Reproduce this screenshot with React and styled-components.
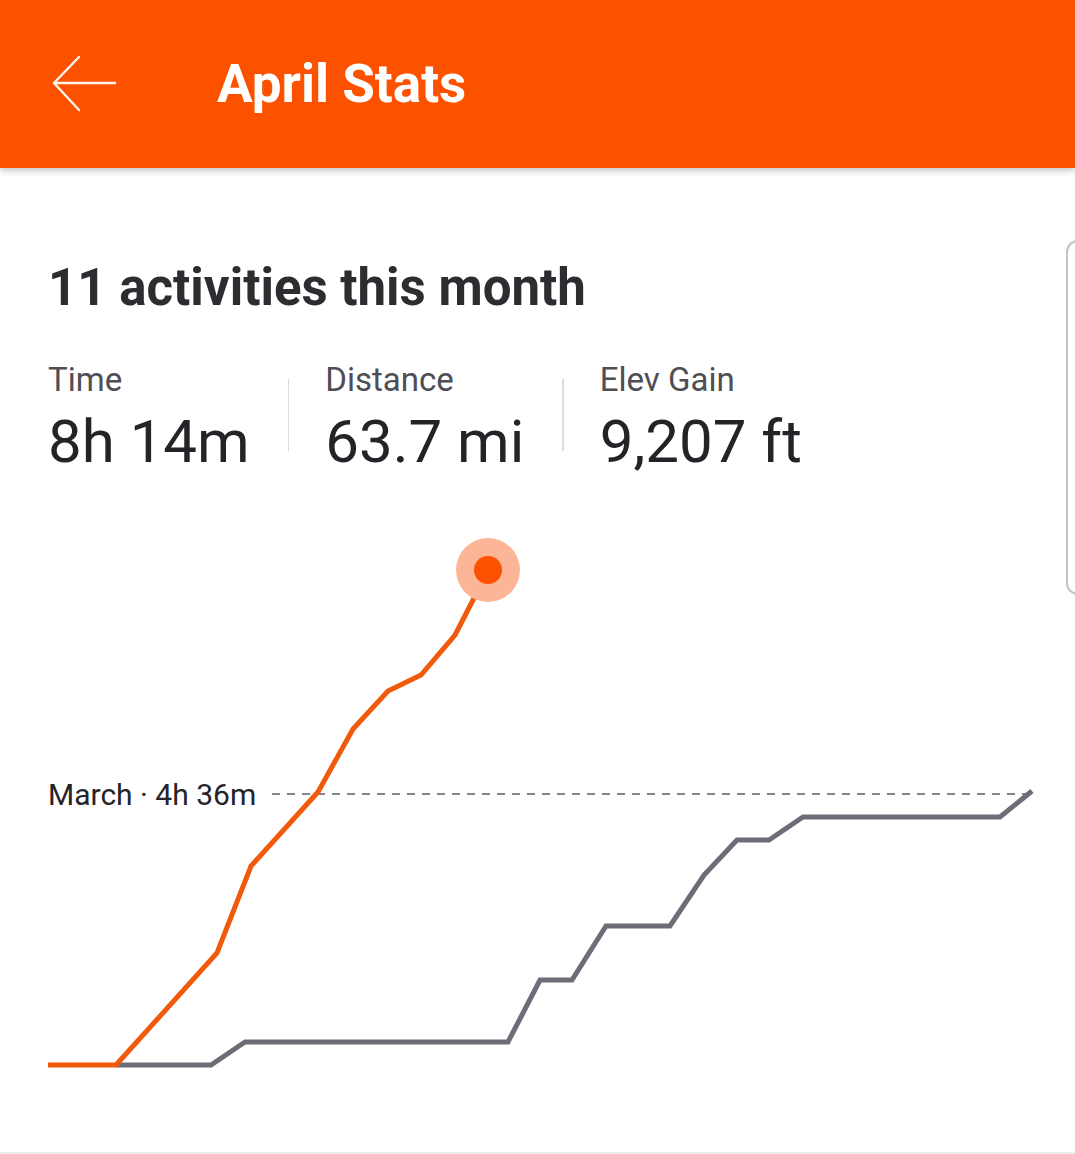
import React from 'react';
import styled, { createGlobalStyle } from 'styled-components';

const GlobalStyle = createGlobalStyle`
  body {
    margin: 0;
    background: #fff;
    font-family: Roboto, "Noto Sans", sans-serif;
  }
`;

const orangePoints = [
    [48, 1066], [116, 1066], [217, 954], [251, 867], [318, 793], [353, 730],
    [388, 692], [421, 676], [455, 636], [488, 572],
];

const grayPoints = [
    [116, 1066], [211, 1066], [245, 1043], [508, 1043], [540, 981], [572, 981],
    [606, 927], [670, 927], [704, 876], [737, 841], [769, 841], [803, 818],
    [1000, 818], [1032, 792],
];

// chart svg sits at y=520 on the page, points above are page coords
const CHART_TOP = 520;

const toPath = (points) =>
    points.map(([x, y]) => `${x},${y - CHART_TOP}`).join(' ');

const stats = [
    { label: 'Time', value: '8h 14m' },
    { label: 'Distance', value: '63.7 mi' },
    { label: 'Elev Gain', value: '9,207 ft' },
];

const BackArrow = () => (
    <svg width="66" height="58" viewBox="0 0 66 58" fill="none">
        <path d="M64 28 H3 M28 2 L3 28 L28 55" stroke="#FFF4EC" strokeWidth="2.4" strokeLinecap="round" strokeLinejoin="round" />
    </svg>
);

const App = () => {
    const last = orangePoints[orangePoints.length - 1];
    return (
        <Page>
            <GlobalStyle />
            <Header>
                <BackButton><BackArrow /></BackButton>
                <Title>April Stats</Title>
            </Header>
            <Carousel>
                <Panel>
                    <Heading>11 activities this month</Heading>
                    <StatsRow>
                        {stats.map((s, i) => (
                            <React.Fragment key={s.label}>
                                {i > 0 && <Divider />}
                                <Stat>
                                    <StatLabel>{s.label}</StatLabel>
                                    <StatValue>{s.value}</StatValue>
                                </Stat>
                            </React.Fragment>
                        ))}
                    </StatsRow>
                    <Chart width="1066" height="580" viewBox="0 0 1066 580">
                        <line x1="272" y1={795 - CHART_TOP} x2="1030" y2={795 - CHART_TOP} stroke="#85858a" strokeWidth="1.8" strokeDasharray="8 7" />
                        <text x="48" y={806 - CHART_TOP} fontFamily="Roboto, sans-serif" fontSize="30" fill="#242428">March · 4h 36m</text>
                        <polyline points={toPath(grayPoints)} fill="none" stroke="#6d6d78" strokeWidth="5" />
                        <polyline points={toPath(orangePoints)} fill="none" stroke="#F05A0A" strokeWidth="5" />
                        <circle cx={last[0]} cy={last[1] - CHART_TOP - 1} r="32" fill="#FDB598" />
                        <circle cx={last[0]} cy={last[1] - CHART_TOP - 1} r="14" fill="#FC5200" />
                    </Chart>
                </Panel>
                <NextCard />
            </Carousel>
            <BottomRule />
        </Page>
    );
};

const Page = styled.div`
  width: 1075px;
  height: 1154px;
  display: flex;
  flex-direction: column;
  overflow: hidden;
`;

const Header = styled.header`
  height: 168px;
  flex-shrink: 0;
  background: #FC5200;
  display: flex;
  align-items: center;
  padding-left: 51px;
  box-shadow: 0 3px 6px rgba(0, 0, 0, 0.22);
  position: relative;
  z-index: 1;
`;

const BackButton = styled.div`
  display: flex;
  align-items: center;
`;

const Title = styled.h1`
  margin: 0 0 0 100px;
  color: #fff;
  font-size: 53px;
  font-weight: 700;
`;

const Carousel = styled.div`
  flex: 1;
  display: flex;
  align-items: flex-start;
`;

const Panel = styled.section`
  width: 1066px;
  flex-shrink: 0;
  padding-top: 90px;
  box-sizing: border-box;
`;

const Heading = styled.h2`
  margin: 0 0 0 48px;
  font-size: 51px;
  line-height: 60px;
  font-weight: 700;
  color: #2d2d31;
`;

const StatsRow = styled.div`
  display: flex;
  align-items: flex-start;
  margin: 43px 0 0 48px;
`;

const Stat = styled.div`
  display: flex;
  flex-direction: column;
`;

const Divider = styled.div`
  width: 1.5px;
  height: 72px;
  margin: 18px 36px 0 38px;
  background: #dcdcde;
`;

const StatLabel = styled.span`
  font-size: 33px;
  line-height: 38px;
  color: #4e4e54;
`;

const StatValue = styled.span`
  font-size: 60px;
  line-height: 68px;
  color: #242428;
  margin-top: 9px;
`;

const Chart = styled.svg`
  display: block;
  margin-top: 43px;
`;

const NextCard = styled.div`
  width: 40px;
  height: 355px;
  margin-top: 72px;
  flex-shrink: 0;
  border: 2px solid #c4c4c6;
  border-right: none;
  border-radius: 12px 0 0 12px;
  box-sizing: border-box;
`;

const BottomRule = styled.div`
  height: 2px;
  background: #ececee;
  flex-shrink: 0;
`;

export default App;
